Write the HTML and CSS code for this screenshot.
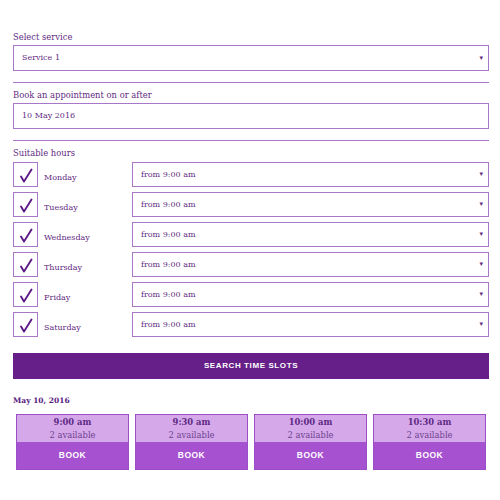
FILE: index.html
```html
<!DOCTYPE html>
<html>
	<head>
		<meta charset="utf-8">
		<title>Booking</title>
		<link rel="stylesheet" href="styles.css">
	</head>
	<body>
		<div class="booking">
			<div class="field">
				<div class="label">Select service</div>
				<div class="select">Service 1<span class="arrow">&#9662;</span></div>
			</div>
			<hr class="line">
			<div class="field">
				<div class="label">Book an appointment on or after</div>
				<div class="input">10 May 2016</div>
			</div>
			<hr class="line">
			<div class="label">Suitable hours</div>
			<ul class="days">
				<li class="day">
					<span class="check"><svg viewBox="0 0 25 25" width="25" height="25"><path d="M8 14.5 L11 19.5 L18.5 7.5" /></svg></span>
					<span class="day_name">Monday</span>
					<div class="select hours">from 9:00 am<span class="arrow">&#9662;</span></div>
				</li>
				<li class="day">
					<span class="check"><svg viewBox="0 0 25 25" width="25" height="25"><path d="M8 14.5 L11 19.5 L18.5 7.5" /></svg></span>
					<span class="day_name">Tuesday</span>
					<div class="select hours">from 9:00 am<span class="arrow">&#9662;</span></div>
				</li>
				<li class="day">
					<span class="check"><svg viewBox="0 0 25 25" width="25" height="25"><path d="M8 14.5 L11 19.5 L18.5 7.5" /></svg></span>
					<span class="day_name">Wednesday</span>
					<div class="select hours">from 9:00 am<span class="arrow">&#9662;</span></div>
				</li>
				<li class="day">
					<span class="check"><svg viewBox="0 0 25 25" width="25" height="25"><path d="M8 14.5 L11 19.5 L18.5 7.5" /></svg></span>
					<span class="day_name">Thursday</span>
					<div class="select hours">from 9:00 am<span class="arrow">&#9662;</span></div>
				</li>
				<li class="day">
					<span class="check"><svg viewBox="0 0 25 25" width="25" height="25"><path d="M8 14.5 L11 19.5 L18.5 7.5" /></svg></span>
					<span class="day_name">Friday</span>
					<div class="select hours">from 9:00 am<span class="arrow">&#9662;</span></div>
				</li>
				<li class="day">
					<span class="check"><svg viewBox="0 0 25 25" width="25" height="25"><path d="M8 14.5 L11 19.5 L18.5 7.5" /></svg></span>
					<span class="day_name">Saturday</span>
					<div class="select hours">from 9:00 am<span class="arrow">&#9662;</span></div>
				</li>
			</ul>
			<div class="search_btn">SEARCH TIME SLOTS</div>
			<div class="date_title">May 10, 2016</div>
			<ul class="slots">
				<li class="slot">
					<div class="slot_info"><b>9:00 am</b><span>2 available</span></div>
					<div class="slot_book">BOOK</div>
				</li>
				<li class="slot">
					<div class="slot_info"><b>9:30 am</b><span>2 available</span></div>
					<div class="slot_book">BOOK</div>
				</li>
				<li class="slot">
					<div class="slot_info"><b>10:00 am</b><span>2 available</span></div>
					<div class="slot_book">BOOK</div>
				</li>
				<li class="slot">
					<div class="slot_info"><b>10:30 am</b><span>2 available</span></div>
					<div class="slot_book">BOOK</div>
				</li>
			</ul>
		</div>
	</body>
</html>
```

FILE: styles.css
```css
* {
	box-sizing: border-box;
}

body {
	margin: 0;
	background: #fff;
	font-family: "DejaVu Serif", "Liberation Serif", serif;
	font-size: 8px;
	color: #5f2a82;
}

ul,
li {
	list-style: none;
	margin: 0;
	padding: 0;
}

.booking {
	padding: 31px 11px 0 13px;
}

.label {
	height: 14px;
	line-height: 13px;
	font-size: 8.4px;
}

.select,
.input {
	position: relative;
	height: 26px;
	line-height: 24px;
	padding-left: 8px;
	border: 1px solid #a977c8;
}

.arrow {
	position: absolute;
	right: 5px;
	top: 0;
	font-size: 7px;
}

.line {
	margin: 11px 0 6px;
	border: 0;
	border-top: 1px solid #a977c8;
}

.days {
	display: flex;
	flex-direction: column;
	gap: 5px;
	margin-top: 1px;
}

.day {
	display: flex;
	align-items: center;
	height: 25px;
}

.check {
	width: 25px;
	height: 25px;
	border: 1px solid #a977c8;
	display: flex;
	align-items: center;
	justify-content: center;
}

.check svg {
	flex: none;
}

.check path {
	fill: none;
	stroke: #5c1a86;
	stroke-width: 1.9;
	stroke-linecap: round;
	stroke-linejoin: round;
}

.day_name {
	width: 94px;
	padding-left: 6px;
	padding-top: 5px;
}

.select.hours {
	flex: 1;
	height: 25px;
	line-height: 23px;
}

.search_btn {
	margin-top: 16px;
	height: 26px;
	line-height: 26px;
	background: #661f88;
	color: #fff;
	text-align: center;
	font-family: "Liberation Sans", Arial, sans-serif;
	font-weight: bold;
	font-size: 8px;
	letter-spacing: 0.6px;
}

.date_title {
	margin-top: 15px;
	height: 13px;
	line-height: 13px;
	font-weight: bold;
	font-size: 7.5px;
	color: #5a2380;
}

.slots {
	display: grid;
	grid-template-columns: repeat(4, 1fr);
	gap: 6px;
	margin: 7px 3px 0;
}

.slot {
	border: 1px solid #9c4ec6;
}

.slot_info {
	height: 27px;
	background: #d5a9e9;
	display: flex;
	flex-direction: column;
	align-items: center;
	justify-content: center;
	line-height: 13px;
	font-size: 8.4px;
	color: #5e2884;
}

.slot_info span {
	color: #6e4190;
}

.slot_book {
	height: 27px;
	line-height: 27px;
	background: #a651cf;
	color: #fff;
	text-align: center;
	font-family: "Liberation Sans", Arial, sans-serif;
	font-weight: bold;
	font-size: 8.5px;
	letter-spacing: 0.5px;
}
```
